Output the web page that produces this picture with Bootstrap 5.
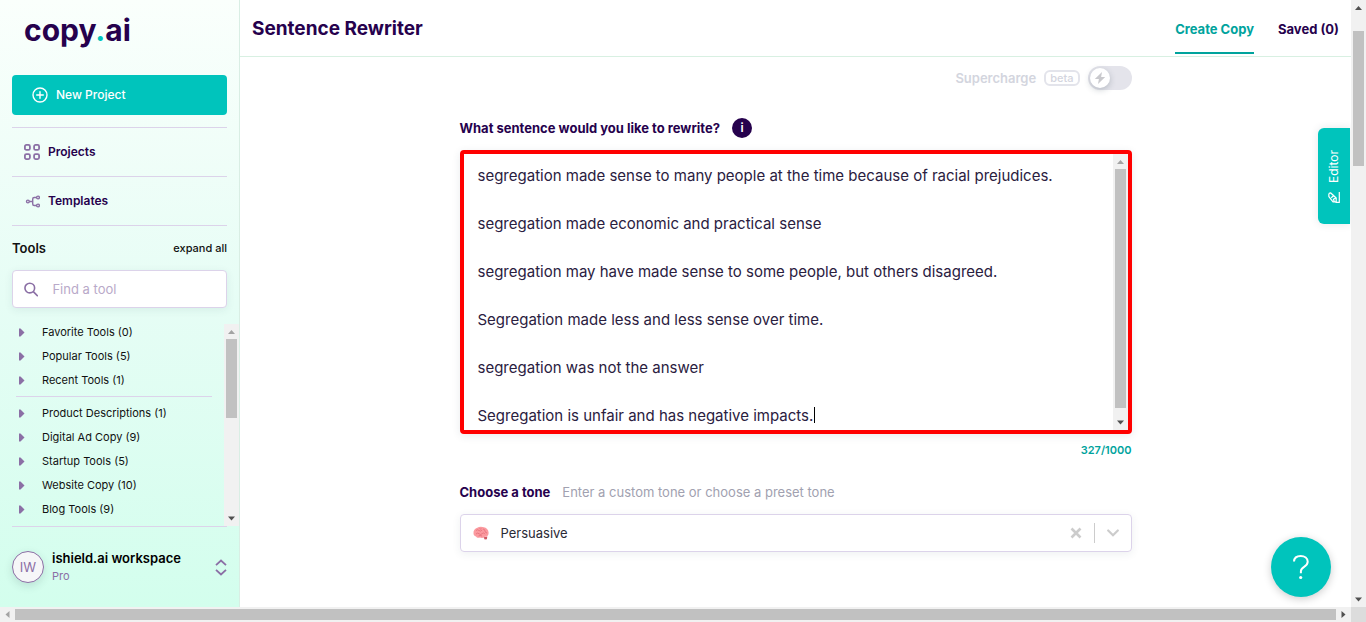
<!DOCTYPE html>
<html lang="en">
<head>
<meta charset="utf-8">
<meta name="viewport" content="width=device-width, initial-scale=1">
<title>Sentence Rewriter - copy.ai</title>
<link href="https://cdn.jsdelivr.net/npm/bootstrap@5.3.0/dist/css/bootstrap.min.css" rel="stylesheet">
<style>
:root { --teal: #00c4bc; --teal-dark: #00a39d; --ink: #26014d; --mauve: #8b6fa5; --rule: #dcd3ea; }
body { font-family: Inter, "Liberation Sans", sans-serif; font-size: 13px; line-height: 20px; color: #111; }
a { text-decoration: none; color: inherit; }
.window-frame { display: grid; grid-template-columns: minmax(0, 1fr) 15px; grid-template-rows: minmax(0, 1fr) 15px; height: 100vh; }
.scroll-corner { background: #dcdcdc; }

/* scroll bars */
.sbar { background: #f1f1f1; display: flex; flex: none; }
.sbar-v { flex-direction: column; width: 15px; }
.sbar svg { width: 15px; height: 15px; flex: none; fill: #505050; }
.sbar svg.at-end { fill: #a3a3a3; }
.sbar-track { flex: 1 1 0; min-height: 0; min-width: 0; padding: 0 2px; }
.sbar-h .sbar-track { padding: 2px 0; }
.sbar-thumb { background: #c1c1c1; height: 100%; }

/* side bar */
.side { width: 240px; flex: none; border-right: 1px solid #d9eee4; background: linear-gradient(#fafffc, #e6fdf5 50%, #d3feed); }
.brand { font-size: 30px; line-height: 40px; font-weight: 700; color: var(--ink); margin: 10px 0 25px 12px; }
.brand span { color: var(--teal); }
.btn-new { background: var(--teal); color: #fff; height: 40px; border: 0; border-radius: 4px; font-size: 12px; font-weight: 500; padding: 0 20px; }
.btn-new:hover { background: var(--teal-dark); color: #fff; }
.side-link { height: 49px; border-top: 1px solid var(--rule); padding: 0 12px; font-size: 12px; font-weight: 600; color: var(--ink); }
.side-link svg, .seek svg { stroke: var(--mauve); fill: none; }
.tools-head { border-top: 1px solid var(--rule); height: 45px; }
.expand { font-size: 11px; font-weight: 500; }
.seek { height: 38px; border: 1px solid var(--rule); border-radius: 4px; background: #fff; box-shadow: 0 2px 8px rgba(38, 60, 77, .08); padding-left: 11px; }
.seek input { border: 0; outline: 0; background: none; color: #333; padding: 0 2px; min-width: 0; }
.seek input::placeholder { color: #b9a9c9; opacity: 1; }
.tool-scroller { min-height: 0; }
.tool-list { gap: 8px; padding-right: 12px; font-size: 11px; font-weight: 500; line-height: 16px; overflow: hidden; }
.tool-list button { border: 0; background: none; padding: 0 0 0 19px; gap: 17px; color: #111; text-align: left; }
.tool-list svg { fill: var(--mauve); }
.tool-list hr { margin: 0 0 0 16px; border-color: var(--rule); opacity: 1; }
.account { height: 81px; border: 0; border-top: 1px solid var(--rule); background: none; padding: 0; text-align: left; }
.avatar { width: 32px; height: 32px; border: 1px solid var(--mauve); border-radius: 50%; background: #f6f6f8; color: var(--mauve); font-size: 13px; box-shadow: 0 3px 8px rgba(38, 60, 77, .15); }
.account-text { padding-bottom: 2px; }
.account-plan { color: var(--mauve); font-size: 11px; line-height: 16px; }

/* main pane */
.top { height: 57px; border-bottom: 1px solid #d8f0e2; padding: 0 12px; }
.top h1 { font-size: 19px; line-height: 24px; font-weight: 700; color: var(--ink); padding-top: 17px; }
.top-tab { font-weight: 700; color: var(--ink); line-height: 24px; padding: 17px 0 11px; border-bottom: 2px solid transparent; }
.top-tab.current { color: var(--teal-dark); border-color: var(--teal-dark); }
.workspace { max-width: 672px; width: 100%; margin: 0 auto; padding-top: 9px; }
.charge { color: #d3d5de; font-weight: 600; height: 24px; }
.beta { border: 2px solid #e3e4eb; border-radius: 6px; font-size: 11px; font-weight: 500; line-height: 12px; padding: 0 4px; }
.toggle { width: 44px; height: 24px; }
.toggle input { appearance: none; width: 44px; height: 24px; margin: 0; border-radius: 12px; background: #e4e4eb; display: block; }
.toggle span { position: absolute; left: 2px; top: 2px; width: 20px; height: 20px; border-radius: 50%; background: #fff; box-shadow: 0 2px 6px rgba(38, 60, 77, .25); pointer-events: none; }
.field-name { font-weight: 700; color: var(--ink); }
.info { width: 20px; height: 20px; border: 0; border-radius: 50%; background: var(--ink); color: #fff; font-size: 12px; line-height: 20px; padding: 0; }
.prompt-box { border: 4px solid #f00; border-radius: 4px; box-shadow: 0 2px 8px rgba(38, 60, 77, .1); height: 284px; margin: 12px 0 8px; }
.prompt-box textarea { border: 0; outline: 0; resize: none; overflow: hidden; font-size: 15px; line-height: 24px; color: #2a2040; padding: 10px 14px 0; }
.caret { position: absolute; left: 350px; top: 253px; width: 1px; height: 16px; background: #000; }
.count { color: var(--teal-dark); font-size: 11px; font-weight: 600; line-height: 16px; }
.hint { color: #a1a1b0; }
.picker { height: 38px; border: 1px solid var(--rule); border-radius: 4px; box-shadow: 0 2px 8px rgba(38, 60, 77, .08); }
.picker select { appearance: none; border: 0; outline: 0; background: none; color: #2a2a35; padding: 0; }
.picker button { border: 0; background: none; padding: 0; line-height: 0; }
.picker .bar { width: 1px; height: 20px; background: #ccc; margin: 0 8px 0 12px; }
.editor-tab { position: absolute; right: 1px; top: 128px; width: 32px; height: 96px; border: 0; border-radius: 6px 0 0 6px; background: var(--teal); color: #fff; font-size: 12px; box-shadow: 0 0 8px rgba(38, 60, 77, .12); padding: 0; gap: 9px; }
.editor-tab span { writing-mode: vertical-rl; rotate: 180deg; }
.help { position: absolute; right: 20px; bottom: 10px; width: 60px; height: 60px; border: 0; border-radius: 50%; background: var(--teal); color: #fff; box-shadow: 0 2px 8px rgba(0, 0, 0, .2); padding: 0; }
</style>
<script src="https://cdn.jsdelivr.net/npm/bootstrap@5.3.0/dist/js/bootstrap.bundle.min.js"></script>
</head>
<body>
<div class="window-frame">
  <div class="d-flex position-relative overflow-hidden">
    <aside class="side d-flex flex-column">
      <div class="ps-2 pe-2 mx-1">
        <a class="brand d-block" href="#">copy<span>.</span>ai</a>
        <button class="btn btn-new w-100 d-flex align-items-center gap-2" type="button">
          <svg width="16" height="16" viewBox="0 0 16 16" fill="none" stroke="#fff" stroke-width="1.4" stroke-linecap="round"><circle cx="8" cy="8" r="7"/><path d="M8 4.7v6.6M4.7 8h6.6"/></svg>
          New Project
        </button>
        <nav class="mt-2 pt-1">
          <a class="side-link d-flex align-items-center gap-2" href="#">
            <svg width="16" height="16" viewBox="0 0 16 16" stroke-width="1.8"><rect x=".9" y=".9" width="5" height="5" rx="1.5"/><rect x="10.1" y=".9" width="5" height="5" rx="1.5"/><rect x=".9" y="10.1" width="5" height="5" rx="1.5"/><rect x="10.1" y="10.1" width="5" height="5" rx="1.5"/></svg>
            Projects
          </a>
          <a class="side-link d-flex align-items-center gap-2" href="#">
            <svg width="16" height="16" viewBox="0 0 16 16" stroke-width="1.4"><circle cx="3.9" cy="8.5" r="1.4"/><path d="M5.4 8.5h3.3M12.800 4.500h-2.600q-1.500 0-1.500 1.500v5q0 1.500 1.500 1.500h2.600"/><circle cx="14" cy="4.5" r="1.4"/><circle cx="14" cy="12.5" r="1.4"/></svg>
            Templates
          </a>
        </nav>
        <div class="tools-head d-flex align-items-center justify-content-between">
          <strong class="fw-semibold">Tools</strong>
          <a class="expand" href="#">expand all</a>
        </div>
        <div class="seek d-flex align-items-center gap-2">
          <svg width="17" height="17" viewBox="0 0 17 17" stroke-width="1.9"><circle cx="6.800" cy="6.800" r="5.700"/><path d="M11 11l5.300 5.300"/></svg>
          <input class="flex-grow-1 ms-1" type="search" placeholder="Find a tool" aria-label="Find a tool">
        </div>
      </div>
      <div class="tool-scroller d-flex flex-grow-1 mt-3">
        <div class="tool-list d-flex flex-column flex-grow-1">
          <button class="d-flex align-items-center" type="button"><svg width="6" height="9" viewBox="0 0 6 9"><path d="M0 .5h1.500l4 4-4 4H0z"/></svg>Favorite Tools (0)</button>
          <button class="d-flex align-items-center" type="button"><svg width="6" height="9" viewBox="0 0 6 9"><path d="M0 .5h1.500l4 4-4 4H0z"/></svg>Popular Tools (5)</button>
          <button class="d-flex align-items-center" type="button"><svg width="6" height="9" viewBox="0 0 6 9"><path d="M0 .5h1.500l4 4-4 4H0z"/></svg>Recent Tools (1)</button>
          <hr>
          <button class="d-flex align-items-center" type="button"><svg width="6" height="9" viewBox="0 0 6 9"><path d="M0 .5h1.500l4 4-4 4H0z"/></svg>Product Descriptions (1)</button>
          <button class="d-flex align-items-center" type="button"><svg width="6" height="9" viewBox="0 0 6 9"><path d="M0 .5h1.500l4 4-4 4H0z"/></svg>Digital Ad Copy (9)</button>
          <button class="d-flex align-items-center" type="button"><svg width="6" height="9" viewBox="0 0 6 9"><path d="M0 .5h1.500l4 4-4 4H0z"/></svg>Startup Tools (5)</button>
          <button class="d-flex align-items-center" type="button"><svg width="6" height="9" viewBox="0 0 6 9"><path d="M0 .5h1.500l4 4-4 4H0z"/></svg>Website Copy (10)</button>
          <button class="d-flex align-items-center" type="button"><svg width="6" height="9" viewBox="0 0 6 9"><path d="M0 .5h1.500l4 4-4 4H0z"/></svg>Blog Tools (9)</button>
        </div>
        <div class="sbar sbar-v" aria-hidden="true">
          <svg class="at-end" viewBox="0 0 15 15"><path d="M4 10l3.500-4L11 10z"/></svg>
          <div class="sbar-track"><div class="sbar-thumb" style="height:46%"></div></div>
          <svg viewBox="0 0 15 15"><path d="M4 5.500h7l-3.500 4z"/></svg>
        </div>
      </div>
      <div class="ps-2 pe-2 mx-1">
        <button class="account w-100 d-flex align-items-center gap-2" type="button">
          <span class="avatar d-flex align-items-center justify-content-center">IW</span>
          <span class="account-text flex-grow-1"><span class="d-block fw-semibold">ishield.ai workspace</span><span class="account-plan d-block">Pro</span></span>
          <svg width="12" height="17" viewBox="0 0 12 17" fill="none" stroke="#8b6fa5" stroke-width="1.8"><path d="M1 6.200l5-4.700 5 4.700M1 10.800l5 4.700 5-4.700"/></svg>
        </button>
      </div>
    </aside>

    <main class="flex-grow-1">
      <header class="top d-flex align-items-start">
        <h1 class="mb-0 me-auto">Sentence Rewriter</h1>
        <nav class="d-flex gap-4">
          <a class="top-tab current" href="#">Create Copy</a>
          <a class="top-tab" href="#">Saved (0)</a>
        </nav>
      </header>
      <form class="workspace">
        <div class="charge d-flex align-items-center justify-content-end gap-2">
          <label for="supercharge">Supercharge</label>
          <span class="beta">beta</span>
          <div class="toggle position-relative">
            <input id="supercharge" type="checkbox" role="switch">
            <span><svg class="d-block" width="20" height="20" viewBox="0 0 20 20" fill="#c9c9cd"><path d="M12 4L4.800 11h4.100L8 16l7.200-7h-4.100z"/></svg></span>
          </div>
        </div>
        <div class="d-flex align-items-center mt-4 pt-1 gap-2">
          <label class="field-name me-1" for="sentence">What sentence would you like to rewrite?</label>
          <button class="info fw-semibold" type="button" aria-label="More information">i</button>
        </div>
        <div class="prompt-box d-flex position-relative">
<textarea id="sentence" class="flex-grow-1" spellcheck="false">segregation made sense to many people at the time because of racial prejudices.

segregation made economic and practical sense

segregation may have made sense to some people, but others disagreed.

Segregation made less and less sense over time.

segregation was not the answer

Segregation is unfair and has negative impacts.</textarea>
          <i class="caret"></i>
          <div class="sbar sbar-v" aria-hidden="true">
            <svg class="at-end" viewBox="0 0 15 15"><path d="M4 10l3.500-4L11 10z"/></svg>
            <div class="sbar-track"><div class="sbar-thumb" style="height:97%"></div></div>
            <svg viewBox="0 0 15 15"><path d="M4 5.500h7l-3.500 4z"/></svg>
          </div>
        </div>
        <div class="count text-end">327/1000</div>
        <div class="d-flex gap-2 mt-4 pb-1 mb-2">
          <label class="field-name me-1" for="tone">Choose a tone</label>
          <span class="hint">Enter a custom tone or choose a preset tone</span>
        </div>
        <div class="picker d-flex align-items-center px-2">
          <svg class="ms-1 me-2" width="16" height="14" viewBox="0 0 16 14"><path d="M10.500 11.200l1.200 2.300 2.200-.3.400-2.700z" fill="#cf5963"/><path d="M.5 7.200C.2 4.500 2 2.200 4.300 1.700 6 .4 9 .3 10.800 1.300c2.500.4 4.700 2.600 4.800 5.200.2 2.400-1.100 4.300-3.400 4.300-1.700 1.400-3.800 1.300-5.200.7-2 .6-3.300.1-4-1C1.300 10.100.5 8.800.5 7.200z" fill="#fb9a9f"/><path d="M3 4.500q1.500-1.500 3 0t3.200-.6M3 8q1.800-1.800 3.200-.2t3-.2 2.700.6M10 3q1.700 0 2 2t2 2M6.500 2.500q1 1 2 .2M5.500 10q1.800-1 3.500 0" fill="none" stroke="#e36f79" stroke-width=".8"/></svg>
          <select id="tone" class="flex-grow-1 ms-1"><option>Persuasive</option><option>Friendly</option><option>Professional</option></select>
          <button type="button" aria-label="Clear tone"><svg width="12" height="12" viewBox="0 0 12 12" stroke="#ccc" stroke-width="2.6"><path d="M1.500 1.500l9 9M10.500 1.500l-9 9"/></svg></button>
          <span class="bar"></span>
          <svg class="mx-1" width="12" height="8" viewBox="0 0 12 8" fill="none" stroke="#ccc" stroke-width="2.2" stroke-linecap="round"><path d="M1.200 1.500L6 6.300l4.800-4.800"/></svg>
        </div>
      </form>
    </main>

    <button class="editor-tab d-flex flex-column align-items-center justify-content-center" type="button">
      <span>Editor</span>
      <svg width="12" height="11" viewBox="0 0 12 11" fill="none" stroke="#fff" stroke-width="1.2" stroke-linejoin="round"><path d="M.8 2.300Q1 .8 2.500.8L8.200 6v3.800H5L.9 4.600zM3.200 5.800l3-2.600M6.300 9.500l-.9-2.300 2.700-1.400M11.300 0v10.400H7.500"/></svg>
    </button>
    <button class="help" type="button" aria-label="Help"><svg width="20" height="26" viewBox="0 0 20 26" fill="none" stroke="#fff" stroke-width="2"><path d="M3 7.500C3.200 4 5.900 2 9.700 2c4 0 7 2.300 7 5.800 0 5.400-6.800 4.700-6.800 9.400v2"/><circle cx="9.700" cy="23.500" r="1.600" fill="#fff" stroke="none"/></svg></button>
  </div>

  <div class="sbar sbar-v" aria-hidden="true">
    <svg viewBox="0 0 15 15"><path d="M4 10l3.500-4L11 10z"/></svg>
    <div class="sbar-track pt-3"><div class="sbar-thumb" style="height:24%"></div></div>
    <svg viewBox="0 0 15 15"><path d="M4 5.500h7l-3.500 4z"/></svg>
  </div>
  <div class="sbar sbar-h" aria-hidden="true">
    <svg class="at-end" viewBox="0 0 15 15"><path d="M9.500 4v7l-4-3.500z"/></svg>
    <div class="sbar-track"><div class="sbar-thumb"></div></div>
    <svg viewBox="0 0 15 15"><path d="M5.500 4v7l4-3.500z"/></svg>
  </div>
  <div class="scroll-corner"></div>
</div>
</body>
</html>
